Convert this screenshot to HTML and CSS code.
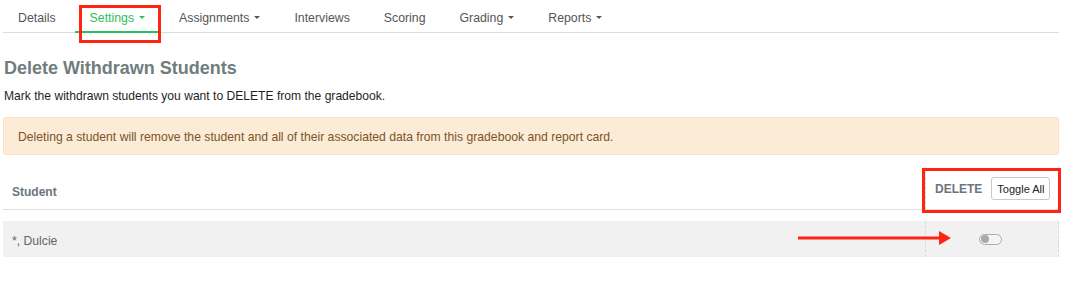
FILE: index.html
```html
<!DOCTYPE html>
<html>
    <head>
        <title>Delete Withdrawn Students</title>
        <link rel="stylesheet" href="styles.css">
    </head>
    <body>

        <div class="page">

            <nav class="tabs">
                <a class="tab">Details</a>
                <a class="tab active">Settings <span class="caret"></span></a>
                <a class="tab">Assignments <span class="caret"></span></a>
                <a class="tab">Interviews</a>
                <a class="tab">Scoring</a>
                <a class="tab">Grading <span class="caret"></span></a>
                <a class="tab">Reports <span class="caret"></span></a>
            </nav>

            <h2 class="title">Delete Withdrawn Students</h2>
            <p class="intro">Mark the withdrawn students you want to DELETE from the gradebook.</p>

            <div class="alert">Deleting a student will remove the student and all of their associated data from this gradebook and report card.</div>

            <div class="grid-row head">
                <div class="cell">Student</div>
                <div class="cell del-col">
                    <span>DELETE</span>
                    <button class="btn-toggle">Toggle All</button>
                </div>
            </div>

            <div class="grid-row body">
                <div class="cell">*, Dulcie</div>
                <div class="cell del-col">
                    <span class="switch"><span class="knob"></span></span>
                </div>
            </div>

        </div>

        <!-- annotations drawn over the screenshot -->
        <div class="mark mark-settings"></div>
        <div class="mark mark-delete"></div>
        <svg class="arrow" width="160" height="20" viewBox="0 0 160 20">
            <rect x="0" y="8.5" width="144" height="3" fill="#ff2412"/>
            <polygon points="141,3 153,10 141,17" fill="#ff2412"/>
        </svg>

    </body>
</html>
```

FILE: styles.css
```css
body {
    margin: 0;
    font-family: "Liberation Sans", Arial, sans-serif;
    color: #222;
    background: #fff;
}

.page {
    width: 1056px;
    padding-left: 3px;
}

/* Tabs */
.tabs {
    display: flex;
    gap: 4px;
    border-bottom: 1px solid #dcdcdc;
    height: 32px;
}

.tab {
    display: flex;
    align-items: center;
    gap: 5px;
    padding: 2px 15px 0;
    font-size: 12.3px;
    color: #555;
    box-sizing: border-box;
    height: 33px;
    margin-bottom: -1px;
}

.tab.active {
    color: #2dbf5b;
    border-bottom: 2px solid #2dbf5b;
    padding-top: 4px;
}

.caret {
    width: 0;
    height: 0;
    border-left: 3px solid transparent;
    border-right: 3px solid transparent;
    border-top: 3px solid currentColor;
}

.title {
    margin: 24px 0 0 1px;
    font-size: 18px;
    line-height: 22px;
    color: #717d7d;
}

.intro {
    margin: 8px 0 0 1px;
    font-size: 12.1px;
    line-height: 18px;
    color: #1e1e1e;
}

.alert {
    margin-top: 12px;
    padding: 11px 14px 9px;
    font-size: 12.2px;
    line-height: 16px;
    color: #7a5527;
    background: #fcebd6;
    border: 1px solid #f8e0c0;
    border-radius: 3px;
}

/* Student list */
.grid-row {
    display: grid;
    grid-template-columns: 1fr 134px;
}

.grid-row.head {
    padding-top: 12px;
    border-bottom: 1px solid #dcdfe2;
}

.grid-row.head .cell {
    font-size: 12px;
    font-weight: bold;
    color: #6c757d;
    padding: 10px 0 9px 9px;
    display: flex;
    align-items: center;
}

.grid-row.head .cell:first-child {
    padding-top: 13px;
    padding-bottom: 6px;
}

.grid-row.body {
    margin-top: 11px;
    background: #f1f1f1;
    height: 36px;
}

.grid-row.body .cell {
    font-size: 12.2px;
    color: #666;
    padding-left: 9px;
    display: flex;
    align-items: center;
}

.grid-row.body .cell:first-child {
    padding-top: 3px;
}

.del-col {
    border-left: 1px dashed #dadada;
    border-right: 1px dashed #dadada;
}

.grid-row.head .del-col {
    gap: 9px;
    padding-left: 9px;
}

.grid-row.body .del-col {
    justify-content: center;
    padding-left: 0;
}

.btn-toggle {
    font-family: "Liberation Sans", Arial, sans-serif;
    font-size: 11px;
    color: #222;
    background: #fff;
    border: 1px solid #c9c9c9;
    border-radius: 3px;
    height: 23px;
    padding: 0 5px;
}

.switch {
    width: 19px;
    height: 9px;
    border: 1px solid #a9adb1;
    border-radius: 6px;
    background: #f4f4f4;
    display: flex;
    align-items: center;
    padding: 0 1px;
    margin-right: 4px;
}

.knob {
    width: 8px;
    height: 8px;
    border-radius: 50%;
    background: #a6aaaf;
}

/* Red annotation boxes */
.mark {
    position: absolute;
    border: 3px solid #ff2412;
    box-sizing: border-box;
}

.mark-settings {
    left: 79px;
    top: 5px;
    width: 82px;
    height: 38px;
}

.mark-delete {
    left: 922px;
    top: 168px;
    width: 139px;
    height: 45px;
}

.arrow {
    position: absolute;
    left: 798px;
    top: 228px;
}
```
